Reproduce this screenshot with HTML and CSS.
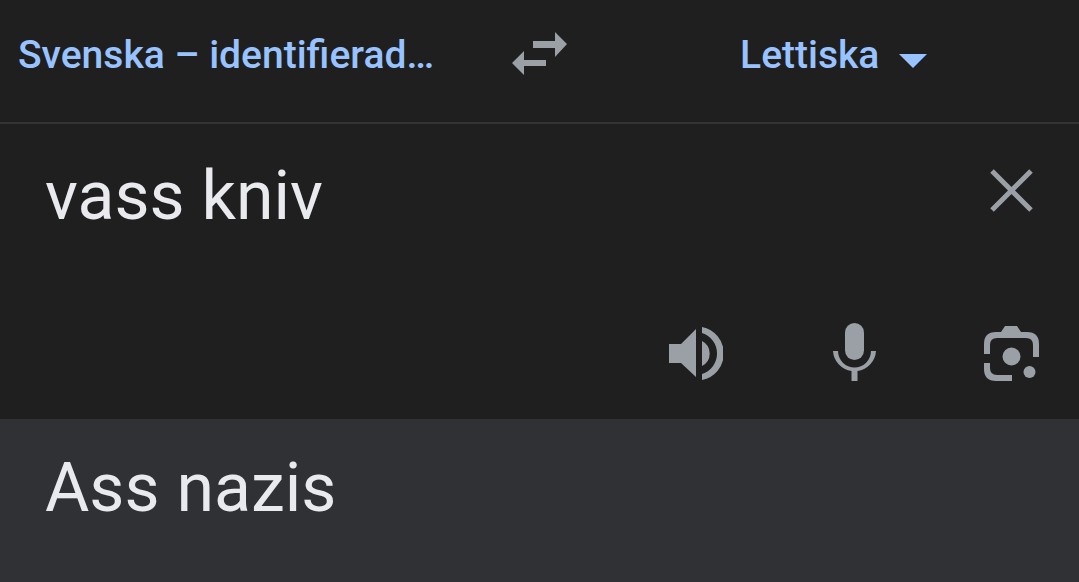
FILE: index.html
```html
<!DOCTYPE html>
<html lang="sv">
<head>
    <meta charset="UTF-8">
    <meta name="viewport" content="width=device-width, initial-scale=1.0">
    <title>Översätt</title>
    <link rel="stylesheet" href="styles.css">
</head>
<body>

<header class="languages">
    <button type="button" class="language source-language">Svenska – identifierad…</button>
    <button type="button" class="icon-button" aria-label="Byt språk">
        <svg width="56" height="44" viewBox="0 0 56 44">
            <path d="M21 9H43V0L55 12 43 25V16H21zM34 28H12V19L0 31 12 43V34H34z"/>
        </svg>
    </button>
    <button type="button" class="language target-language">
        Lettiska
        <svg class="caret" width="28" height="14" viewBox="0 0 28 14">
            <path d="M0 0H28L14 14z"/>
        </svg>
    </button>
</header>

<main>
    <section class="source">
        <div class="source-row">
            <textarea class="source-text" rows="1" aria-label="Källtext" spellcheck="false">vass kniv</textarea>
            <button type="button" class="icon-button clear" aria-label="Rensa">
                <svg width="44" height="44" viewBox="0 0 44 44">
                    <path class="stroke" d="M3 3L42 42M42 3L3 42"/>
                </svg>
            </button>
        </div>
        <div class="tools">
            <button type="button" class="icon-button" aria-label="Lyssna">
                <svg width="58" height="60" viewBox="0 0 58 60">
                    <path d="M4 21H16L31 6V54L16 40H4zM37 18A14 14 0 0 1 37 43zM37 4A27 27 0 0 1 37 57V51A21.500 21.500 0 0 0 37 10z"/>
                </svg>
            </button>
            <button type="button" class="icon-button" aria-label="Tala">
                <svg width="56" height="60" viewBox="0 0 56 60">
                    <rect x="20" y="0" width="19" height="37" rx="9.500"/>
                    <path d="M8 28H13A16.500 16.500 0 0 0 46 28H51A21.500 21.500 0 0 1 32.500 48V58H26.500V48A21.500 21.500 0 0 1 8 28z"/>
                </svg>
            </button>
            <button type="button" class="icon-button" aria-label="Kamera">
                <svg width="56" height="60" viewBox="0 0 56 60">
                    <path d="M1 31V21Q1 9 13 9H18L22 3H34L38 9H44Q56 9 56 21V34H50V22Q50 15 43 15H14Q7 15 7 22V31z"/>
                    <path d="M1 40H7V45Q7 52 14 52H29V58H13Q1 58 1 46z"/>
                    <circle cx="28.500" cy="33.500" r="9"/>
                    <circle cx="46.500" cy="49" r="6"/>
                </svg>
            </button>
        </div>
    </section>

    <section class="result">
        <p class="result-text">Ass nazis</p>
    </section>
</main>

</body>
</html>
```
FILE: styles.css
```css
* {
    box-sizing: border-box;
}
body {
    font-family: Roboto, sans-serif;
    background-color: #1f1f1f;
    color: #e8eaed;
    margin: 0;
    min-height: 100vh;
    display: flex;
    flex-direction: column;
}
main {
    flex: 1;
    display: flex;
    flex-direction: column;
}
button {
    padding: 0;
    border: none;
    background: none;
    font-family: inherit;
    cursor: pointer;
}
svg {
    display: block;
    fill: #9aa0a6;
}
.stroke {
    fill: none;
    stroke: #9aa0a6;
    stroke-width: 5px;
}
.languages {
    display: grid;
    grid-template-columns: 1fr 98px 1fr;
    padding: 32px 0 44px;
    border-bottom: 2px solid #333436;
}
.language {
    color: #99c3ff;
    font-size: 39px;
    font-weight: 500;
    line-height: 46px;
    white-space: nowrap;
}
.source-language {
    padding-left: 18px;
    text-align: left;
}
.target-language {
    display: flex;
    justify-content: center;
    align-items: center;
    gap: 20px;
}
.caret {
    fill: #99c3ff;
    margin-top: 12px;
}
.icon-button {
    display: flex;
    justify-content: center;
    align-items: flex-start;
}
.source {
    padding: 32px 40px 36px 45px;
}
.source-row {
    display: flex;
    align-items: flex-start;
}
.source-text {
    flex: 1;
    min-width: 0;
    height: 80px;
    padding: 0;
    border: none;
    outline: none;
    resize: none;
    overflow: hidden;
    background: none;
    color: inherit;
    font-family: inherit;
    font-size: 68px;
    line-height: 80px;
}
.clear {
    width: 56px;
    height: 68px;
    align-items: center;
}
.tools {
    display: flex;
    justify-content: flex-end;
    gap: 102px;
    margin-top: 87px;
}
.result {
    flex: 1;
    padding: 29px 45px;
    background-color: #303134;
}
.result-text {
    margin: 0;
    font-size: 68px;
    line-height: 80px;
}
```
